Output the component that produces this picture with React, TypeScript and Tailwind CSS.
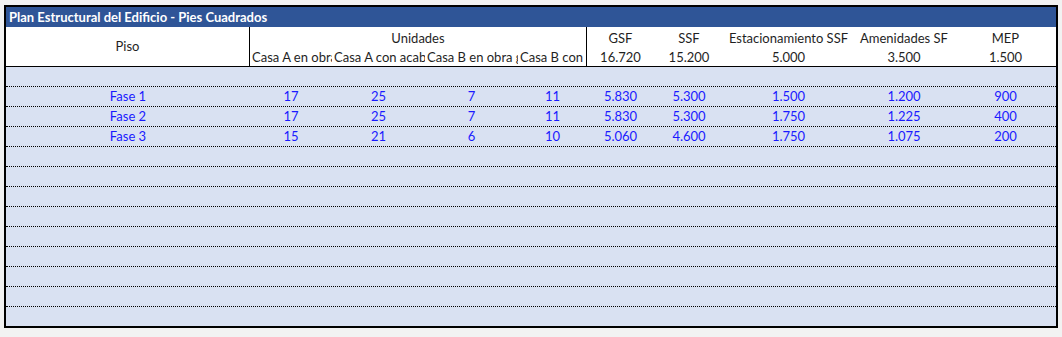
const cols = 'grid grid-cols-[244px_82px_93px_93px_69px_67px_70px_129px_102px_101px]';

const fases = [
  { piso: 'Fase 1', u: [17, 25, 7, 11], gsf: '5.830', ssf: '5.300', est: '1.500', amen: '1.200', mep: '900' },
  { piso: 'Fase 2', u: [17, 25, 7, 11], gsf: '5.830', ssf: '5.300', est: '1.750', amen: '1.225', mep: '400' },
  { piso: 'Fase 3', u: [15, 21, 6, 10], gsf: '5.060', ssf: '4.600', est: '1.750', amen: '1.075', mep: '200' },
];

const unidades = ['Casa A en obra gris', 'Casa A con acabados', 'Casa B en obra gris', 'Casa B con acabados'];

function Row({ data, last }: { data?: (typeof fases)[number]; last?: boolean }) {
  const cells = data
    ? [data.piso, ...data.u.map(String), data.gsf, data.ssf, data.est, data.amen, data.mep]
    : Array(10).fill('');
  return (
    <div className={`${cols} ${last ? 'h-[19px]' : 'h-[20px] border-b border-dotted border-black'}`}>
      {cells.map((c, i) => (
        <div key={i} className="flex items-center justify-center text-[#1a1aff] leading-none">
          {c}
        </div>
      ))}
    </div>
  );
}

export default function App() {
  const rows = [undefined, ...fases, ...Array(9).fill(undefined)];

  return (
    <div
      className="w-[1062px] h-[337px] bg-[#f2f2f2] pt-[5px] pl-[4px] text-[13px] text-[#1f1f1f]"
      style={{ fontFamily: 'Lato, "Noto Sans", sans-serif' }}
    >
      <div className="w-[1054px] h-[323px] border-2 border-black bg-[#d9e1f2]">
        <div className="h-[20px] bg-[#2f5597] text-white font-bold flex items-center pl-[3px] leading-none">
          Plan Estructural del Edificio - Pies Cuadrados
        </div>

        {/* header */}
        <div className={`${cols} grid-rows-[20px_19px] bg-white border-b border-black h-[40px]`}>
          <div className="row-span-2 border-r border-black flex items-center justify-center">Piso</div>
          <div className="col-span-4 row-span-2 border-r border-black grid grid-cols-[82px_93px_93px_68px] grid-rows-[20px_19px]">
            <div className="col-span-4 flex items-end justify-center leading-none pb-[2px]">Unidades</div>
            {unidades.map((u) => (
              <div key={u} className="overflow-hidden whitespace-nowrap flex items-end pl-[2px] leading-none pb-[2px]">
                {u}
              </div>
            ))}
          </div>
          {[
            ['GSF', '16.720'],
            ['SSF', '15.200'],
            ['Estacionamiento SSF', '5.000'],
            ['Amenidades SF', '3.500'],
            ['MEP', '1.500'],
          ].map(([h, v]) => (
            <div key={h} className="row-span-2 grid grid-rows-[20px_19px]">
              <div className="flex items-end justify-center leading-none pb-[2px] whitespace-nowrap">{h}</div>
              <div className="flex items-end justify-center leading-none pb-[2px]">{v}</div>
            </div>
          ))}
        </div>

        {rows.map((r, i) => (
          <Row key={i} data={r} last={i === rows.length - 1} />
        ))}
      </div>
    </div>
  );
}
